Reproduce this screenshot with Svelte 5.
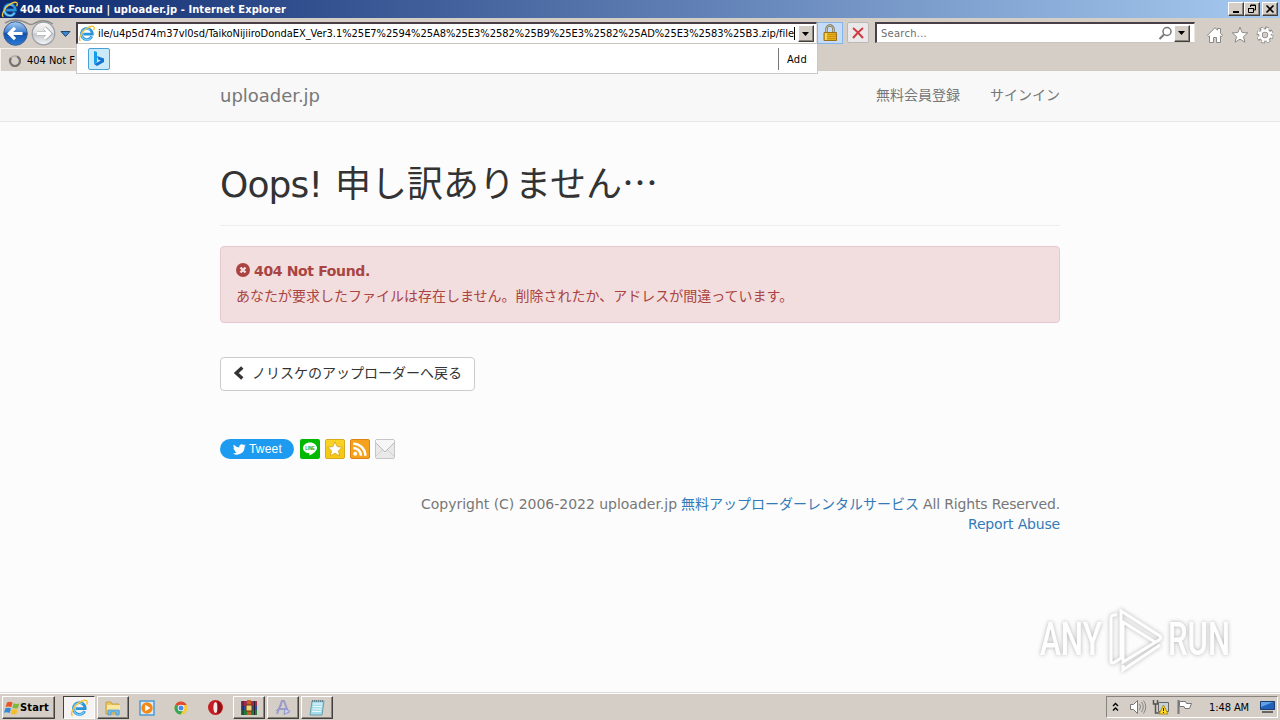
<script>
  const address =
    'ile/u4p5d74m37vl0sd/TaikoNijiiroDondaEX_Ver3.1%25E7%2594%25A8%25E3%2582%25B9%25E3%2582%25AD%25E3%2583%25B3.zip/file';

  // Spreads the letters of a single-line label over the given width.
  function fit(node, width) {
    const natural = node.getBoundingClientRect().width;
    const count = node.textContent.length;
    node.style.letterSpacing = `${(width - natural) / count}px`;
  }
</script>

{#snippet ie(size)}
  <svg width={size} height={size} viewBox="0 0 16 16">
    <path d="M13 10.700A5.200 5.200 0 1 1 13.500 8.600H5" fill="none" stroke="#2b93da" stroke-width="2.500" />
    <path d="M12.600 11.200A4.900 4.900 0 0 1 3.400 9.500V7.500A5 5 0 0 1 11 4.300" fill="none" stroke="#7fd0f8" stroke-width="1" />
    <path d="M2.300 14.900C-.2 13.500 3 6.700 8 3.300c3.500-2.400 7.200-3 7.300-.7.100.800-.2 1.600-.6 2.400" fill="none" stroke="#f3c53a" stroke-width="1.300" />
  </svg>
{/snippet}

{#snippet drop()}
  <svg width="8" height="4" viewBox="0 0 8 4"><path d="M0 0h7L3.500 4z" fill="#000" /></svg>
{/snippet}

<div class="screen">
  <header class="title">
    {@render ie(17)}
    <b use:fit={266}>404 Not Found | uploader.jp - Internet Explorer</b>
    <div class="controls">
      <span class="raised"><svg width="12" height="10"><path d="M3 8h6" stroke="#000" stroke-width="2" /></svg></span>
      <span class="raised"><svg width="12" height="10"><path d="M4.500 3V1h5v5h-2M4 1.500h6M2.500 4.500h5v4h-5zM2 4.500h6" fill="none" stroke="#000" /></svg></span>
      <span class="raised close"><svg width="12" height="10"><path d="M2.500 1.500l7 7m0-7l-7 7" stroke="#000" stroke-width="1.600" /></svg></span>
    </div>
  </header>

  <div class="toolbar">
    <div class="navrow">
      <svg class="arrows" width="76" height="30" viewBox="0 0 76 30">
        <defs>
          <linearGradient id="back" x2="0" y2="1">
            <stop offset="0" stop-color="#a9cdf2" /><stop offset=".42" stop-color="#4684d2" />
            <stop offset=".5" stop-color="#1450a8" /><stop offset="1" stop-color="#2b7bdb" />
          </linearGradient>
          <linearGradient id="fwd" x2="0" y2="1">
            <stop offset="0" stop-color="#fafafa" /><stop offset=".48" stop-color="#dedede" />
            <stop offset=".52" stop-color="#c3c5c9" /><stop offset="1" stop-color="#f4f7fa" />
          </linearGradient>
        </defs>
        <path d="M5 5Q15-1 27 5Q31 8 35 5Q44 0 53 6" fill="none" stroke="#8f8d8a" stroke-width="1.500" />
        <circle cx="15.500" cy="15.500" r="11.800" fill="url(#back)" stroke="#3c5f94" stroke-width="1" />
        <path d="M22.500 15.500H9.500M15 9.800l-5.700 5.700 5.700 5.700" fill="none" stroke="#fff" stroke-width="3.200" />
        <circle cx="43.500" cy="15.500" r="11.300" fill="url(#fwd)" stroke="#9a9ea5" stroke-width="1.200" />
        <path d="M37 15.500h12.500M44.500 10l5.500 5.500-5.500 5.500" fill="none" stroke="#a9abae" stroke-width="4.200" />
        <path d="M37 15.500h12M44.500 10.200l5.300 5.300-5.300 5.300" fill="none" stroke="#fff" stroke-width="2.800" />
        <path d="M61 13.500h9L65.500 18.500z" fill="#3c86cf" stroke="#1c4578" />
      </svg>
      <div class="field address">
        {@render ie(17)}
        <span class="url" use:fit={696}>{address}</span><i class="caret"></i>
        <span class="raised combo">{@render drop()}</span>
      </div>
      <div class="lock">
        <svg width="16" height="18" viewBox="0 0 16 18">
          <path d="M4.500 9V5a3.500 3.500 0 0 1 7 0v4" fill="none" stroke="#777054" stroke-width="2.400" />
          <path d="M4.500 9V5a3.500 3.500 0 0 1 7 0v4" fill="none" stroke="#ddd5ad" stroke-width=".8" />
          <path d="M2 8.500h12.500v8H2z" fill="#e5ad18" stroke="#9b721b" />
          <path d="M3 10.500h11M3 12.500h11M3 14.500h11" stroke="#cf9613" />
          <path d="M4 9v7" stroke="#ffe469" stroke-width="1.500" />
        </svg>
      </div>
      <div class="stop">
        <svg width="14" height="14" viewBox="0 0 14 14"><path d="M2 2q5 4 10 10M12 2Q7 6 2 12" fill="none" stroke="#ce3c43" stroke-width="2" /></svg>
      </div>
      <div class="field search">
        <span use:fit={46}>Search...</span>
        <svg width="15" height="15" viewBox="0 0 15 15"><circle cx="9" cy="5.500" r="4" fill="none" stroke="#777" stroke-width="1.500" /><path d="M6 8.500L1.500 13" stroke="#777" stroke-width="2" /></svg>
        <span class="raised combo">{@render drop()}</span>
      </div>
      <div class="tools">
        <svg width="18" height="18" viewBox="0 0 18 18"><path d="M1.500 9.300L9 1.700l2.500 2.500V2.500h3v4.700l2 2.100-1.300 1.200-.7-.7v6.700h-4v-5h-3v5h-4V9.800l-.7.700z" fill="#fff" stroke="#8c8a87" /></svg>
        <svg width="18" height="18" viewBox="0 0 18 18"><path d="M9 1.300l2.200 5.200 5.600.4-4.300 3.700 1.400 5.600L9 13.200l-4.900 3 1.400-5.600L1.200 6.900l5.600-.4z" fill="#fff" stroke="#8c8a87" /></svg>
        <svg width="18" height="18" viewBox="0 0 18 18">
          <circle cx="9" cy="9" r="6.700" fill="none" stroke="#8c8a87" stroke-width="3.600" stroke-dasharray="3.400 1.862" />
          <circle cx="9" cy="9" r="4.600" fill="none" stroke="#8c8a87" stroke-width="4.400" />
          <circle cx="9" cy="9" r="6.500" fill="none" stroke="#fff" stroke-width="2.500" stroke-dasharray="2.400 2.705" stroke-dashoffset="-.5" />
          <circle cx="9" cy="9" r="4.500" fill="none" stroke="#fff" stroke-width="2.700" />
        </svg>
      </div>
    </div>
    <div class="tabrow">
      <div class="tab">
        <svg width="14" height="14" viewBox="0 0 14 14"><circle cx="7" cy="7" r="5" fill="none" stroke="#b5b1ad" stroke-width="2.200" /><path d="M9 2.400A5 5 0 1 1 3 4" fill="none" stroke="#77736f" stroke-width="2.200" /></svg>
        <span use:fit={48}>404 Not F</span>
      </div>
    </div>
    <div class="suggest">
      <span class="bing"><svg width="14" height="17" viewBox="0 0 14 17"><path d="M2 1l3 1v10l-3 2z" fill="#159ee9" /><path d="M5 6l7 2.500v3.400L5 16l-3-2 5-2.500 2-.8-2.800-1.200z" fill="#1473d4" /></svg></span>
      <span class="add"><span use:fit={20}>Add</span></span>
    </div>
  </div>

  <main class="page">
    <nav>
      <div class="wrap">
        <span class="brand" use:fit={100}>uploader.jp</span>
        <span class="link">無料会員登録</span>
        <span class="link">サインイン</span>
      </div>
    </nav>
    <div class="wrap body">
      <h1><span class="oops" use:fit={102}>Oops!</span>申し訳ありません<span class="dots">…</span></h1>
      <section class="alert">
        <div class="code">
          <svg width="14" height="14" viewBox="0 0 14 14"><circle cx="7" cy="7" r="7" fill="#a94442" /><path d="M4.500 4.500l5 5m0-5l-5 5" stroke="#f2dede" stroke-width="2.400" /></svg>
          <b use:fit={116}>404 Not Found.</b>
        </div>
        <p>あなたが要求したファイルは存在しません。削除されたか、アドレスが間違っています。</p>
      </section>
      <button>
        <svg width="11" height="14" viewBox="0 0 11 14"><path d="M9.300 1.500L3.300 7l6 5.500" fill="none" stroke="#333" stroke-width="3.400" /></svg>
        <span>ノリスケのアップローダーへ戻る</span>
      </button>
      <div class="share">
        <span class="tweet">
          <svg width="13" height="11" viewBox="0 0 24 20"><path d="M23.600 2.400a9.700 9.700 0 0 1-2.800.8A4.900 4.900 0 0 0 23 .500a9.700 9.700 0 0 1-3.100 1.200 4.900 4.900 0 0 0-8.300 4.400A13.800 13.800 0 0 1 1.600 1a4.900 4.900 0 0 0 1.500 6.500 4.800 4.800 0 0 1-2.200-.6 4.900 4.900 0 0 0 3.900 4.900 4.900 4.900 0 0 1-2.200 0 4.900 4.900 0 0 0 4.500 3.400A9.800 9.800 0 0 1 0 17.300 13.900 13.900 0 0 0 21.300 5a10 10 0 0 0 2.300-2.600z" fill="#fff" /></svg>
          <span use:fit={33}>Tweet</span>
        </span>
        <svg width="20" height="20" viewBox="0 0 20 20">
          <rect width="20" height="20" rx="2" fill="#00b900" />
          <path d="M10 3.500c-4 0-7 2.500-7 5.500 0 2.700 2.600 4.900 6 5.300.8.200.5 1 .4 2.200 2-.9 7.600-4 7.600-7.500 0-3-3-5.500-7-5.500z" fill="#fff" />
          <text x="5.200" y="10.700" textLength="9.600" lengthAdjust="spacingAndGlyphs" class="line">LINE</text>
        </svg>
        <svg width="20" height="20" viewBox="0 0 20 20">
          <rect x=".5" y=".5" width="19" height="19" rx="1.500" fill="#f6c912" stroke="#d9a91e" /><path d="M1 1h18v8H1z" fill="#fadb36" opacity=".55" />
          <path d="M10 2.800l2.200 4.800 5.200.6-3.900 3.500 1.100 5.200-4.600-2.600-4.600 2.600 1.100-5.200-3.900-3.500 5.200-.6z" fill="#fff" stroke="#d79b15" stroke-width=".8" />
        </svg>
        <svg width="20" height="20" viewBox="0 0 20 20">
          <rect x=".5" y=".5" width="19" height="19" rx="1.500" fill="#f5a11b" stroke="#dc8317" />
          <circle cx="5.200" cy="14.800" r="2" fill="#fff" /><path d="M3.300 9a7.700 7.700 0 0 1 7.700 7.700M3.300 4.700a12 12 0 0 1 12 12" fill="none" stroke="#fff" stroke-width="2.500" />
        </svg>
        <svg width="20" height="20" viewBox="0 0 20 20">
          <rect x=".5" y=".5" width="19" height="19" rx="1.500" fill="#e9e9e9" stroke="#c6c6c6" />
          <path d="M1 17l6.500-6M19 17l-6.500-6" stroke="#d0d0d0" /><path d="M1 4l9 9 9-9V1H1z" fill="#f6f6f6" /><path d="M1 4l9 9 9-9" fill="none" stroke="#b8b8b8" />
        </svg>
      </div>
      <footer>
        <div><span use:fit={256}>Copyright (C) 2006-2022 uploader.jp</span><a>無料アップローダーレンタルサービス</a><span use:fit={137}>All Rights Reserved.</span></div>
        <div><a use:fit={92}>Report Abuse</a></div>
      </footer>
    </div>
    <svg class="mark" width="224" height="76" viewBox="0 0 224 76">
      <g class="ink">
        <text x="8" y="50" textLength="62" lengthAdjust="spacingAndGlyphs">ANY</text>
        <text x="136" y="50" textLength="62" lengthAdjust="spacingAndGlyphs">RUN</text>
        <path d="M79 12v45q1 2 4 0l6-4V15M79 12q2-3 6-2M89 15V6l39 25q2 2-1 4L91 57V17l32 20M91 60v5l37-25" fill="none" stroke="#fff" stroke-width="3" />
      </g>
    </svg>
  </main>

  <div class="taskbar">
    <div class="raised start">
      <svg width="17" height="16" viewBox="0 0 17 16">
        <path d="M3 2.500q3-1.600 5.500.1L7.300 7.300Q4.500 5.900 1.700 7z" fill="#ea5526" /><path d="M9.500 3.200q2.800 1.500 6 .1L14 7.900q-3 1.100-5.700-.1z" fill="#80b83b" />
        <path d="M1.400 8.200q3-1.200 5.600.2L5.700 13Q3 11.500 0 12.800z" fill="#3389d4" /><path d="M8 8.900q3 1.300 5.800.2L12.400 14q-3 1.100-5.700-.6z" fill="#f7bd28" />
      </svg>
      <b use:fit={29}>Start</b>
    </div>
    <div class="task active">{@render ie(18)}</div>
    <div class="task raised">
      <svg width="18" height="18" viewBox="0 0 18 18"><path d="M2 3h5l1 2h7v10H2z" fill="#e9c661" stroke="#c6a044" /><path d="M3 6h13v5H3z" fill="#f9e7a0" /><path d="M4 16v-5h11v5h-3v-3H7v3z" fill="#73bce8" stroke="#4e97c2" stroke-width=".7" /></svg>
    </div>
    <div class="task">
      <svg width="18" height="18" viewBox="0 0 18 18"><path d="M2 2h14v14H2z" fill="#d9ebf9" stroke="#4d9bd2" stroke-width="1.500" /><circle cx="9" cy="9" r="5.700" fill="#f38717" /><path d="M7.200 5.800v6.400L12.300 9z" fill="#fff" /></svg>
    </div>
    <div class="task">
      <svg width="16" height="16" viewBox="0 0 16 16"><circle cx="8" cy="8" r="6.500" fill="#f5cb31" /><path d="M8 8L2.400 4.700A6.500 6.500 0 0 1 13.700 5H8z" fill="#df4936" /><path d="M8 8L2.400 4.700A6.500 6.500 0 0 0 7.500 14.500L10.600 9.500z" fill="#36a557" /><circle cx="8" cy="8" r="3.300" fill="#fff" /><circle cx="8" cy="8" r="2.500" fill="#4a89ed" /></svg>
    </div>
    <div class="task">
      <svg width="17" height="17" viewBox="0 0 17 17"><circle cx="8.500" cy="8.500" r="7.500" fill="#c51e22" /><ellipse cx="8.500" cy="8.500" rx="2.100" ry="5.500" fill="#f7e9e5" /><path d="M10.500 2A7 7 0 0 1 10.500 15z" fill="#8f1114" /></svg>
    </div>
    <div class="task raised">
      <svg width="18" height="18" viewBox="0 0 18 18"><path d="M1 2h16v5H1z" fill="#a12a52" /><path d="M1 7h16v4H1z" fill="#274d9c" /><path d="M1 11h16v5H1z" fill="#267c38" /><path d="M7 1h4v15H7z" fill="#c35e24" /><path d="M6 6h6v6H6z" fill="#eed678" stroke="#643116" /><path d="M3 2v14M14.500 2v14" stroke="#242035" /></svg>
    </div>
    <div class="task raised">
      <svg width="18" height="18" viewBox="0 0 18 18"><path d="M3 15L8 2h2l4.500 12M5 10h7" fill="none" stroke="#9a9acb" stroke-width="2" /><path d="M2 12l6-6M10 15.500l6-3-5-3z" fill="#ccd1ef" stroke="#8c94ce" /></svg>
    </div>
    <div class="task raised">
      <svg width="18" height="18" viewBox="0 0 18 18"><path d="M4 2h12l-2 14H2z" fill="#a5dce9" stroke="#689dac" /><path d="M5 5h9M5 7.500h9M4.500 10h9M4 12.500h9" stroke="#edfafc" /><path d="M4 2h12" stroke="#55727c" stroke-width="1.500" stroke-dasharray="1 1" /></svg>
    </div>
    <div class="tray">
      <svg class="chev" width="8" height="10" viewBox="0 0 8 10"><path d="M1 4l2.500-2.500L6 4M1 8.500L3.500 6 6 8.500" fill="none" stroke="#000" stroke-width="1.400" /></svg>
      <svg width="18" height="16" viewBox="0 0 18 16"><path d="M1.500 5.500h3l4-4v13l-4-4h-3z" fill="#fff" stroke="#777" /><path d="M10.500 5q2 3 0 6M12.500 3q3.500 5 0 10M14.500 1.500q4.500 6.500 0 13" fill="none" stroke="#898784" /></svg>
      <svg class="net" width="18" height="16" viewBox="0 0 18 16"><path d="M6.500 3.500h10v9h-10z" fill="#c7d2d8" stroke="#666" /><path d="M1.500 1v4h4V1M3.500 5v9h5" fill="none" stroke="#555" stroke-width="1.500" /><path d="M11.500 6l4.500 9H7z" fill="#ffdc28" stroke="#b28b13" /><path d="M11.500 9v3m0 1v1" stroke="#222" /></svg>
      <svg class="flag" width="18" height="16" viewBox="0 0 18 16"><path d="M2.500 1v14" stroke="#777" stroke-width="2" /><path d="M3.500 2.500h6l1 2h5l-2 5H9l-1-2H3.500z" fill="#fff" stroke="#777" /></svg>
      <span class="clock" use:fit={40}>1:48 AM</span>
      <svg class="desk" width="17" height="14" viewBox="0 0 17 14"><path d="M1.500 1.500h14v8h-14z" fill="#2261bb" stroke="#1d3d70" /><path d="M2 2h12L2 7z" fill="#5fa2e5" /><path d="M3 12h11" stroke="#666" stroke-width="2" /></svg>
    </div>
  </div>
</div>

<style>
  :global(body) { margin: 0; overflow: hidden; }
  .screen { width: 1280px; height: 720px; display: flex; flex-direction: column; background: #fcfcfc; font: 11px/14px "DejaVu Sans Condensed", "DejaVu Sans", sans-serif; font-stretch: condensed; color: #000; white-space: nowrap; overflow: hidden; }
  .screen * { box-sizing: border-box; }
  svg { display: block; flex: none; }
  .raised { background: #d4cec6; border: 1px solid; border-color: #fff #44413d #44413d #fff; box-shadow: inset -1px -1px #88837c; }
  .title { height: 18px; flex: none; display: flex; align-items: center; padding: 0 2px 0 1px; background: linear-gradient(90deg, #0d296f, #a6caf0); color: #fff; }
  .title b { margin: 2px 0 0 2px; }
  .controls { margin-left: auto; display: flex; }
  .controls .raised { width: 16px; height: 14px; padding: 1px; }
  .controls .close { margin-left: 2px; }
  .toolbar { position: relative; height: 53px; flex: none; background: #d4cec6; }
  .navrow { height: 30px; display: flex; align-items: flex-start; }
  .field { background: #fff; display: flex; align-items: center; border: 1px solid #4a3f47; border-width: 2px 1px 1px 2px; border-bottom-color: #c9c4bd; border-right-color: #e8e4df; }
  .address { margin-top: 4px; width: 741px; height: 22px; padding: 0 2px 0 1px; }
  .address > :global(svg) { margin-left: -1px; }
  .url { margin: 1px 0 0 3px; }
  .caret { width: 1px; height: 13px; background: #000; }
  .combo { width: 16px; height: 17px; margin-left: auto; display: flex; align-items: center; justify-content: center; }
  .lock { width: 26px; height: 22px; margin-top: 4px; background: #c4dcf7; border: 1px solid #86b5e9; display: grid; place-items: center; }
  .stop { width: 22px; height: 21px; margin: 4px 0 0 4px; background: #eae8e8; border: 1px solid #bcb8b6; border-radius: 2px; display: grid; place-items: center; }
  .search { width: 320px; height: 21px; margin: 4px 0 0 6px; padding: 0 4px 0 4px; color: #6d6d6d; }
  .search > span:first-child { margin-top: 2px; }
  .search > svg { margin-left: auto; }
  .search .combo { margin-left: 1px; }
  .tools { display: flex; gap: 7px; margin: 8px 0 0 11px; }
  .tabrow { height: 23px; border-bottom: 1px solid #cfcac3; }
  .tab { width: 76px; height: 23px; display: flex; align-items: center; padding: 1px 0 0 7px; gap: 5px; border: 1px solid #f5f2ee; border-width: 1px 0 0 1px; background: #d7d1ca; }
  .suggest { position: absolute; z-index: 2; left: 76px; top: 26px; width: 742px; height: 30px; background: #fff; border: 1px solid #c9c8c7; border-top: 0; display: flex; align-items: center; justify-content: space-between; padding: 0 10px 0 11px; }
  .bing { width: 22px; height: 22px; border: 1px solid #4aa0d5; border-radius: 2px; background: #caeafa; display: grid; place-items: center; }
  .add { height: 22px; border-left: 1px solid #777; padding: 5px 0 0 8px; }
  .page { position: relative; height: 621px; flex: none; color: #333; font: 14px/20px "DejaVu Sans", "Noto Sans CJK JP", sans-serif; }
  .wrap { width: 840px; margin: 0 auto; }
  nav { height: 51px; background: #f8f8f8; border-bottom: 1px solid #e7e7e7; color: #777; }
  nav .wrap { height: 49px; display: flex; align-items: center; }
  .brand { font-size: 18px; margin-right: auto; }
  .link { margin: -3px 0 0 30px; font-family: "Noto Sans CJK JP", sans-serif; }
  h1 { height: 65px; margin: 39px 0 20px; border-bottom: 1px solid #eee; font: 400 36px/40px "DejaVu Sans", "Noto Sans CJK JP", sans-serif; }
  .oops { margin-right: 13px; }
  .dots { font-family: "Noto Sans CJK JP", sans-serif; }
  .alert { height: 77px; background: #f2dede; border: 1px solid #e6c9d0; border-radius: 4px; padding: 14px 15px; color: #a94442; }
  .code { display: flex; align-items: center; gap: 4px; height: 20px; }
  .code svg { margin-top: -3px; }
  .alert p { margin: 5px 0 0; }
  button { display: flex; align-items: center; width: 255px; height: 34px; margin: 34px 0 48px; padding: 0 0 3px 12px; gap: 8px; background: #fff; border: 1px solid #ccc; border-radius: 4px; color: #333; font: 14px/20px "Noto Sans CJK JP", sans-serif; }
  button span { margin-top: -1px; }
  .share { height: 20px; display: flex; gap: 5px; }
  .tweet { width: 74px; height: 20px; margin-right: 1px; padding-left: 13px; border-radius: 10px; background: #1d9bf0; color: #fff; display: flex; align-items: center; gap: 3px; font: 12px/20px "Liberation Sans", Arial, sans-serif; }
  .line { font: bold 4.500px "Liberation Sans", sans-serif; fill: #00a900; }
  footer { margin-top: 35px; color: #777; }
  footer div { display: flex; justify-content: flex-end; gap: 4px; height: 20px; }
  footer a { color: #337ab7; }
  .mark { position: absolute; left: 1032px; top: 534px; overflow: visible; }
  .ink { filter: drop-shadow(0 0 2px #999); opacity: .75; }
  .ink text { font: 500 47px Roboto, sans-serif; fill: #fff; }
  .taskbar { height: 28px; flex: none; display: flex; align-items: flex-start; padding: 3px 2px 0; background: #d4cec6; border-top: 1px solid #dedbd6; box-shadow: inset 0 1px #fff; }
  .start { width: 53px; height: 23px; padding: 0 1px; display: flex; align-items: center; margin-right: 8px; font-size: 11px; }
  .start b { margin-left: -1px; }
  .task { width: 32px; height: 23px; margin-right: 2px; display: grid; place-items: center; }
  .active { background: #f6f4f2; border: 1px solid; border-color: #44413d #fff #fff #44413d; }
  .tray { margin-left: auto; width: 172px; height: 22px; border: 1px solid; border-color: #88837c #fff #fff #88837c; display: flex; align-items: center; padding-left: 4px; }
  .chev { margin: 0 9px 0 1px; }
  .net { margin-left: 5px; }
  .flag { margin-left: 6px; }
  .clock { margin: 1px 0 0 15px; }
  .desk { margin-left: 10px; }
</style>
